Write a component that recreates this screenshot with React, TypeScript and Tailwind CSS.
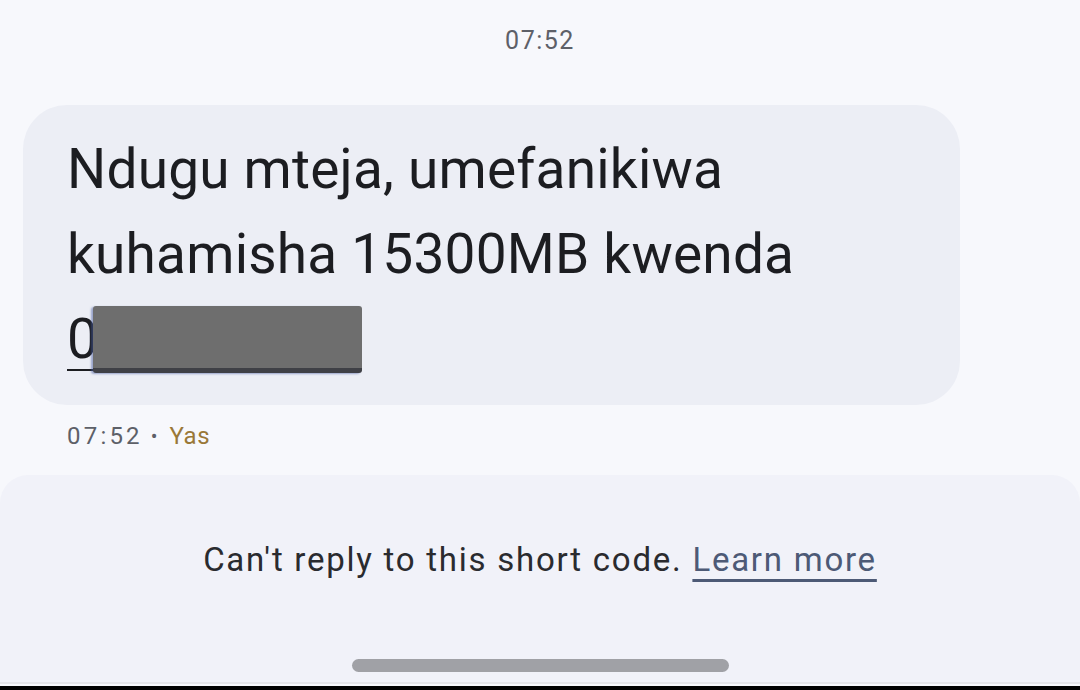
import React from "react";

export default function App() {
  return (
    <div
      className="w-[1080px] h-[690px] bg-[#f7f8fc] flex flex-col overflow-hidden"
      style={{ fontFamily: "Roboto, 'Noto Sans', Arial, sans-serif" }}
    >
      <div className="pt-[26px] text-center text-[25px] leading-[30px] text-[#5d6068] tracking-[1.5px]">
        07:52
      </div>

      <div className="mt-[49px] ml-[23px] w-[937px] rounded-[44px] bg-[#eceef5] pt-[22px] pb-[23px] pl-[44px] pr-[30px]">
        <div className="text-[55px] leading-[85px] text-[#1c1d21] tracking-[0.2px]">
          <div>Ndugu mteja, umefanikiwa</div>
          <div>kuhamisha 15300MB kwenda</div>
          <div className="relative h-[85px]">
            <span className="underline decoration-[2px] underline-offset-[11px]">0</span>
            <div className="absolute left-[26px] top-[9px] w-[269px] h-[67px] rounded-[3px] bg-[#6e6e6e] border-b-[5px] border-b-[#3f4046] shadow-[-2px_1px_2px_rgba(70,90,160,0.5)]" />
          </div>
        </div>
      </div>

      <div className="mt-[16px] ml-[67px] flex items-center text-[24px] leading-[30px]">
        <span className="text-[#5d6068] tracking-[3.2px]">07:52</span>
        <span className="ml-[8px] mr-[12px] text-[#5d6068] text-[20px]">•</span>
        <span className="text-[#9a7838] tracking-[0.5px]">Yas</span>
      </div>

      <div className="mt-[24px] flex-1 rounded-tl-[28px] rounded-tr-[28px] bg-[#f1f2f9] flex flex-col items-center">
        <div className="pt-[65px] text-[33px] leading-[40px] text-[#2a2b2f] tracking-[1.75px]">
          Can't reply to this short code.{" "}
          <span className="text-[#4d5a76] underline decoration-[3px] decoration-[#4d5a76] underline-offset-[8px]">
            Learn more
          </span>
        </div>
        <div className="mt-[79px] w-[377px] h-[13px] rounded-full bg-[#a0a1a6]" />
        <div className="flex-1" />
        <div className="w-full h-[2px] bg-[#e4e5ea]" />
        <div className="w-full h-[2px] bg-[#f7f8fc]" />
      </div>
      <div className="h-[4px] bg-black" />
    </div>
  );
}
